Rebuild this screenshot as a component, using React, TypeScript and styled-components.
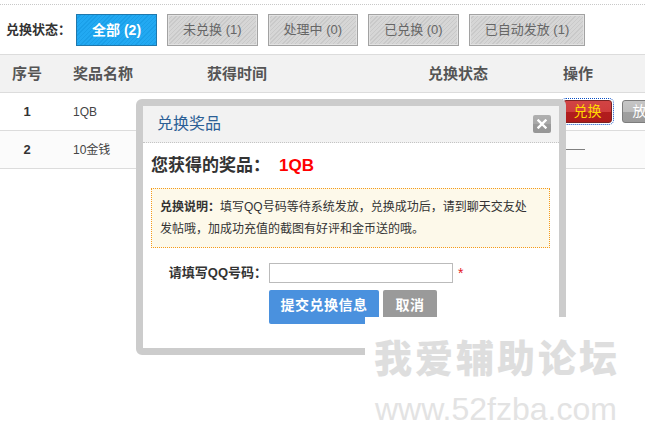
import React from "react";
import styled, { createGlobalStyle, css } from "styled-components";

const GlobalStyle = createGlobalStyle`
  html, body { margin: 0; padding: 0; background: #fff; }
  body {
    font-family: "Liberation Sans", "Noto Sans CJK SC", sans-serif;
    font-size: 12px;
    color: #333;
    width: 645px;
    height: 447px;
    overflow: hidden;
  }
  * { box-sizing: border-box; }
`;

const Page = styled.div`
  position: relative;
  width: 645px;
  height: 447px;
  overflow: hidden;
  padding-top: 4px;
`;

const Wrapper = styled.div`
  border-top: 1px dotted #c8c8c8;
`;

const FilterBar = styled.div`
  display: flex;
  align-items: center;
  height: 49px;
  padding-left: 6px;
  gap: 10px;
`;

const FilterLabel = styled.span`
  font-size: 13px;
  font-weight: bold;
  color: #333;
  line-height: 16px;
  margin-right: -5px;
`;

const FilterButton = styled.button<{ $active?: boolean }>`
  height: 32px;
  padding: 0 15px;
  margin: 0;
  font-family: "Liberation Sans", "Noto Sans CJK SC", sans-serif;
  line-height: 30px;
  cursor: pointer;
  ${(p) =>
    p.$active
      ? css`
          font-size: 14px;
          font-weight: bold;
          color: #fff;
          border: 1px solid #1f78ad;
          background: repeating-linear-gradient(
            -45deg,
            #22a9f2 0px,
            #22a9f2 2px,
            #1a9fe8 2px,
            #1a9fe8 3px
          );
        `
      : css`
          font-size: 13px;
          color: #666;
          border: 1px solid #a2a2a2;
          box-shadow: inset 0 0 0 1px #e2e2e2;
          background: repeating-linear-gradient(
            -45deg,
            #d6d6d6 0px,
            #d6d6d6 2px,
            #c9c9c9 2px,
            #c9c9c9 3px
          );
        `}
`;

const Grid = styled.div<{ $head?: boolean; $alt?: boolean }>`
  display: grid;
  grid-template-columns: 54px 153px 221px 135px 1fr;
  align-items: center;
  height: 38px;
  border-bottom: 1px solid #dcdcdc;
  ${(p) =>
    p.$head &&
    css`
      border-top: 1px solid #dcdcdc;
      height: 39px;
      background: #f2f2f2;
      font-size: 15px;
      font-weight: bold;
      color: #555;
    `}
  ${(p) =>
    p.$alt &&
    css`
      background: #fbfbfb;
    `}
`;

const Cell = styled.div<{ $center?: boolean; $pad?: number }>`
  text-align: ${(p) => (p.$center ? "center" : "left")};
  padding-left: ${(p) => p.$pad ?? 0}px;
  line-height: 20px;
  display: flex;
  align-items: center;
  justify-content: ${(p) => (p.$center ? "center" : "flex-start")};
`;

const Num = styled.span`
  font-size: 13px;
  font-weight: bold;
  color: #333;
`;

const Prize = styled.span`
  font-size: 12px;
  color: #444;
`;

const OpButton = styled.button<{ $tone: "red" | "gray" }>`
  width: 49px;
  height: 23px;
  padding: 0;
  margin: 0;
  border-radius: 3px;
  font-size: 14px;
  font-family: "Liberation Sans", "Noto Sans CJK SC", sans-serif;
  line-height: 21px;
  text-align: center;
  overflow: hidden;
  white-space: nowrap;
  flex-shrink: 0;
  ${(p) =>
    p.$tone === "red"
      ? css`
          color: #ffd800;
          border: 1px solid #7a2323;
          background: linear-gradient(#d24444 0, #cf3d3d 50%, #b21d1d 50%, #ae1c1c 100%);
          outline: 1px dotted #0b4fc4;
          outline-offset: 1px;
        `
      : css`
          color: #fff;
          border: 1px solid #7d7d7d;
          background: linear-gradient(#c6c6c6 0, #bdbdbd 50%, #a0a0a0 50%, #9c9c9c 100%);
          margin-left: 10px;
        `}
`;

const Dash = styled.span`
  display: inline-block;
  width: 22px;
  height: 1px;
  background: #808080;
`;

const Modal = styled.div`
  position: absolute;
  left: 136px;
  top: 99px;
  width: 430px;
  height: 256px;
  border: 7px solid #cccccc;
  border-radius: 6px;
  background: #fff;
  display: flex;
  flex-direction: column;
`;

const ModalHead = styled.div`
  height: 37px;
  background: #f2f2f2;
  border-bottom: 1px dotted #c4c4c4;
  display: flex;
  align-items: center;
  justify-content: space-between;
  padding: 0 8px 0 14px;
`;

const ModalTitle = styled.span`
  font-size: 16px;
  color: #2b5f96;
  line-height: 20px;
`;

const CloseBtn = styled.span`
  width: 18px;
  height: 18px;
  border-radius: 2px;
  background: linear-gradient(#b0b0b0 0, #a8a8a8 50%, #9a9a9a 50%, #969696 100%);
  display: flex;
  align-items: center;
  justify-content: center;
`;

const ModalBody = styled.div`
  padding: 0 9px 0 8px;
`;

const PrizeLine = styled.div`
  margin-top: 11px;
  height: 24px;
  line-height: 24px;
  font-size: 17px;
  font-weight: bold;
  color: #333;
  white-space: nowrap;
`;

const PrizeName = styled.span`
  color: #f00;
  margin-left: 9px;
  font-family: "Liberation Sans", sans-serif;
`;

const Notice = styled.div`
  margin-top: 10px;
  height: 60px;
  border: 1px dotted #f59b1b;
  background: #fdf9ea;
  padding: 7px 14px 7px 8px;
  font-size: 12px;
  line-height: 22px;
  color: #333;
`;

const NoticeKey = styled.b`
  font-weight: bold;
`;

const FormRow = styled.div`
  margin-top: 15px;
  display: grid;
  grid-template-columns: 118px auto;
  align-items: center;
`;

const FormLabel = styled.label`
  text-align: right;
  padding-right: 2px;
  font-size: 13px;
  font-weight: bold;
  color: #333;
  line-height: 20px;
`;

const InputWrap = styled.div`
  display: flex;
  align-items: center;
`;

const TextInput = styled.input`
  width: 184px;
  height: 20px;
  border: 1px solid #bbb;
  padding: 0 4px;
  margin: 0;
  outline: none;
`;

const Star = styled.span`
  color: #e4161d;
  font-size: 14px;
  margin-left: 5px;
  line-height: 14px;
`;

const Actions = styled.div`
  margin-top: 7px;
  padding-left: 118px;
  display: flex;
  gap: 4px;
`;

const ActionBtn = styled.button<{ $primary?: boolean }>`
  height: 34px;
  width: ${(p) => (p.$primary ? 110 : 54)}px;
  padding: 0 0 4px;
  margin: 0;
  border: 0;
  border-radius: 2px;
  background: ${(p) => (p.$primary ? "#4a91de" : "#9a9a9a")};
  color: #fff;
  font-size: 14px;
  font-weight: bold;
  letter-spacing: 0.5px;
  font-family: "Liberation Sans", "Noto Sans CJK SC", sans-serif;
  line-height: 26px;
`;

const Watermark = styled.div`
  position: absolute;
  left: 365px;
  top: 317px;
  right: 0;
  bottom: 0;
  background: #fff;
  padding: 20px 0 0 9px;
  display: flex;
  flex-direction: column;
`;

const MarkTitle = styled.div`
  font-family: "Noto Sans CJK SC", sans-serif;
  font-size: 38px;
  font-weight: 900;
  line-height: 38px;
  letter-spacing: 3px;
  color: #dedede;
  white-space: nowrap;
`;

const MarkUrl = styled.div`
  margin-top: 18px;
  margin-left: 1px;
  font-family: "Liberation Sans", sans-serif;
  font-size: 32px;
  line-height: 32px;
  color: #e3e3e3;
  white-space: nowrap;
`;

const filters = [
  { label: "全部", count: 2, active: true },
  { label: "未兑换", count: 1 },
  { label: "处理中", count: 0 },
  { label: "已兑换", count: 0 },
  { label: "已自动发放", count: 1 },
];

export default function App() {
  return (
    <>
      <GlobalStyle />
      <Page>
        <Wrapper>
          <FilterBar>
            <FilterLabel>兑换状态：</FilterLabel>
            {filters.map((f) => (
              <FilterButton key={f.label} $active={f.active}>
                {f.label} ({f.count})
              </FilterButton>
            ))}
          </FilterBar>
          <Grid $head>
            <Cell $center>序号</Cell>
            <Cell $pad={19}>奖品名称</Cell>
            <Cell>获得时间</Cell>
            <Cell>兑换状态</Cell>
            <Cell>操作</Cell>
          </Grid>
          <Grid>
            <Cell $center>
              <Num>1</Num>
            </Cell>
            <Cell $pad={19}>
              <Prize>1QB</Prize>
            </Cell>
            <Cell />
            <Cell />
            <Cell>
              <OpButton $tone="red">兑换</OpButton>
              <OpButton $tone="gray">放弃</OpButton>
            </Cell>
          </Grid>
          <Grid $alt>
            <Cell $center>
              <Num>2</Num>
            </Cell>
            <Cell $pad={19}>
              <Prize>10金钱</Prize>
            </Cell>
            <Cell />
            <Cell />
            <Cell>
              <Dash />
            </Cell>
          </Grid>
        </Wrapper>

        <Modal>
          <ModalHead>
            <ModalTitle>兑换奖品</ModalTitle>
            <CloseBtn>
              <svg width="10" height="10" viewBox="0 0 10 10">
                <path d="M1.5 1.5 L8.5 8.5 M8.5 1.5 L1.5 8.5" stroke="#fff" strokeWidth="2.4" strokeLinecap="square" />
              </svg>
            </CloseBtn>
          </ModalHead>
          <ModalBody>
            <PrizeLine>
              您获得的奖品：<PrizeName>1QB</PrizeName>
            </PrizeLine>
            <Notice>
              <NoticeKey>兑换说明：</NoticeKey>填写QQ号码等待系统发放，兑换成功后，请到聊天交友处发帖哦，加成功充值的截图有好评和金币送的哦。
            </Notice>
            <FormRow>
              <FormLabel>请填写QQ号码：</FormLabel>
              <InputWrap>
                <TextInput type="text" />
                <Star>*</Star>
              </InputWrap>
            </FormRow>
            <Actions>
              <ActionBtn $primary>提交兑换信息</ActionBtn>
              <ActionBtn>取消</ActionBtn>
            </Actions>
          </ModalBody>
        </Modal>

        <Watermark>
          <MarkTitle>我爱辅助论坛</MarkTitle>
          <MarkUrl>www.52fzba.com</MarkUrl>
        </Watermark>
      </Page>
    </>
  );
}
